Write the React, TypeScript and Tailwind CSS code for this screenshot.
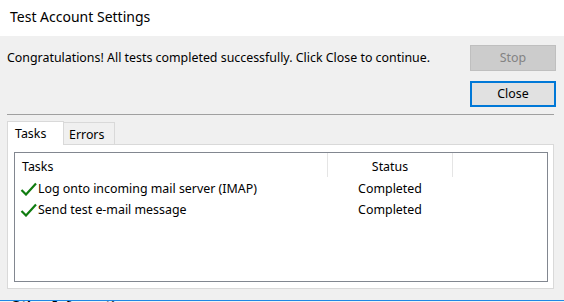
import React from "react";

function Check() {
  return (
    <svg width="17" height="14" viewBox="0 0 17 14" className="shrink-0">
      <path d="M1.5 8 L6 12.5 L16 1.5" fill="none" stroke="#107c10" strokeWidth="2.2" />
    </svg>
  );
}

export default function App() {
  const font = { fontFamily: '"Noto Sans", "Segoe UI", sans-serif' };
  return (
    <div className="w-[564px] h-[302px] overflow-hidden bg-[#f0f0f0] flex flex-col text-[#000]" style={font}>
      <div className="h-[36px] bg-white pl-[10px] pb-[3px] flex items-center text-[14px] shrink-0">
        Test Account Settings
      </div>
      <div className="flex justify-between pl-[7px] pr-[8px] pt-[9px]">
        <div className="text-[12.4px] leading-[26px]">
          Congratulations! All tests completed successfully. Click Close to continue.
        </div>
        <div className="flex flex-col gap-[10px]">
          <div className="w-[86px] h-[26px] bg-[#cccccc] border border-[#bfbfbf] text-[#838383] text-[12.4px] flex items-center justify-center">
            Stop
          </div>
          <div className="w-[86px] h-[26px] bg-[#e1e1e1] border-2 border-[#0078d7] text-[12.4px] flex items-center justify-center">
            Close
          </div>
        </div>
      </div>
      <div className="ml-[7px] mr-[10px] mt-[7px] h-px bg-[#a0a0a0]" />
      <div className="ml-[7px] mr-[10px] mt-[6px] flex items-end h-[23px] text-[12.4px] relative z-10">
        <div className="w-[57px] h-[24px] bg-white border border-b-0 border-[#d9d9d9] flex items-start pt-[3px] pl-[7px] -mb-px">
          Tasks
        </div>
        <div className="w-[51px] h-[22px] bg-[#f0f0f0] border border-l-0 border-b-0 border-[#d9d9d9] flex items-start pt-[3px] pl-[5px]">
          Errors
        </div>
      </div>
      <div className="ml-[7px] mr-[10px] h-[145px] border border-[#d9d9d9] bg-white pl-[6px] pr-[5px] pt-[7px] pb-[6px] shrink-0">
        <div className="h-full border border-[#828790] bg-white text-[12.4px] flex flex-col">
          <div className="flex h-[24px]">
            <div className="w-[313px] border-r border-[#e5e5e5] pl-[7px] pt-[4px] leading-[20px]">Tasks</div>
            <div className="w-[125px] border-r border-[#e5e5e5] text-center pt-[4px] leading-[20px]">Status</div>
          </div>
          <div className="flex h-[22px] items-center pt-[3px]">
            <div className="w-[313px] flex items-center pl-[5px] gap-[1px]">
              <Check />
              <span>Log onto incoming mail server (IMAP)</span>
            </div>
            <div className="w-[124px] text-center">Completed</div>
          </div>
          <div className="flex h-[22px] items-center pt-[1px]">
            <div className="w-[313px] flex items-center pl-[5px] gap-[1px]">
              <Check />
              <span>Send test e-mail message</span>
            </div>
            <div className="w-[124px] text-center">Completed</div>
          </div>
        </div>
      </div>
      <div className="mt-[11px] h-px bg-[#1e88e5] shrink-0" />
      <div className="h-px overflow-hidden pl-[11px] shrink-0">
        <div className="text-[13px] font-bold leading-[10px] -mt-[1px] text-[#000]">Other Information</div>
      </div>
    </div>
  );
}
